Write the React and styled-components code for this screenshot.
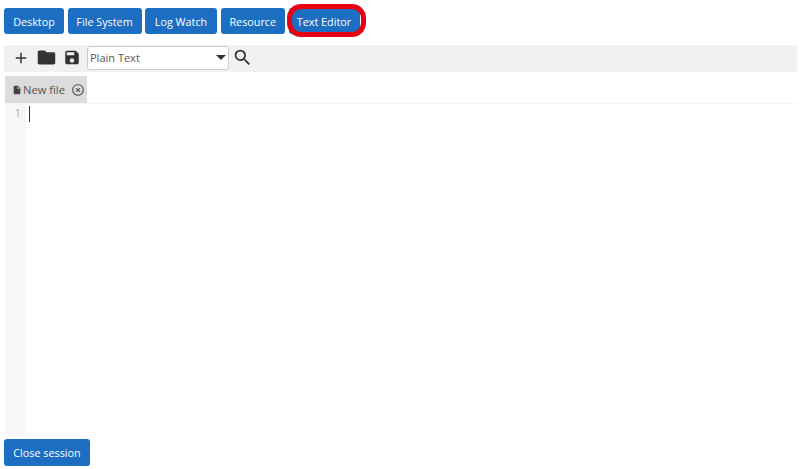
import styled, { createGlobalStyle } from 'styled-components';
import { MdAdd, MdFolder, MdSave, MdSearch, MdInsertDriveFile, MdHighlightOff } from 'react-icons/md';

const GlobalStyle = createGlobalStyle`
  html, body, #root {
    margin: 0;
    height: 100%;
  }

  body {
    background: #fff;
    font-family: "Open Sans", "Noto Sans", sans-serif;
    overflow: hidden;
  }
`;

const Page = styled.div`
  height: 469px;
  box-sizing: border-box;
  padding: 8px 3px 3px 4px;
  display: flex;
  flex-direction: column;
`;

const Tabs = styled.nav`
  display: flex;
  gap: 3.5px;
  height: 26px;
`;

const Button = styled.button`
  position: relative;
  border: 0;
  border-radius: 3px;
  background: #1b6ec2;
  color: #fff;
  font-family: inherit;
  font-size: 10.8px;
  padding: 0;
  height: ${({ $height }) => $height || 26}px;
  width: ${({ $width }) => $width}px;

  &.highlighted::after {
    content: '';
    position: absolute;
    left: -2px;
    right: -6px;
    top: -4px;
    bottom: -3px;
    border: 5px solid #e60012;
    border-radius: 14px;
  }
`;

const Toolbar = styled.div`
  display: flex;
  align-items: center;
  box-sizing: border-box;
  height: 27px;
  margin-top: 11px;
  padding: 0 0 2px 8px;
  background: #f1f1f1;
  color: #333;
`;

const IconButton = styled.span`
  display: flex;
  justify-content: center;
  align-items: center;
  width: ${({ $width }) => $width}px;
  font-size: ${({ $size }) => $size}px;
`;

const ModeSelect = styled.div`
  display: flex;
  align-items: center;
  justify-content: space-between;
  box-sizing: border-box;
  width: 142px;
  height: 24px;
  margin-left: 6px;
  padding: 0 2px;
  background: #fff;
  border: 1px solid #ccc;
  border-radius: 3px;
  color: #555;
  font-size: 11px;
`;

const Caret = styled.span`
  width: 0;
  height: 0;
  border-left: 5px solid transparent;
  border-right: 5px solid transparent;
  border-top: 5px solid #333;
`;

const FileTabs = styled.div`
  display: flex;
  height: 27px;
  margin: 4px 0 0 1px;
  border-bottom: 1px solid #f6f6f6;
`;

const FileTab = styled.div`
  display: flex;
  align-items: center;
  box-sizing: border-box;
  width: 82px;
  padding-left: 7px;
  background: #dcdcdc;
  color: #555;
  font-size: 11.2px;

  svg.file {
    font-size: 10px;
    margin-right: 1px;
    color: #444;
  }

  svg.close {
    font-size: 14px;
    margin-left: 6px;
    color: #555;
  }
`;

const Editor = styled.div`
  flex: 1;
  display: flex;
  margin-left: 1px;
`;

const Gutter = styled.div`
  box-sizing: border-box;
  width: 21px;
  padding: 1px 5px 0 0;
  background: #f7f7f7;
  color: #aaa;
  font-size: 11.5px;
  line-height: 16px;
  text-align: right;
`;

const Lines = styled.div`
  flex: 1;
  padding: 2px 0 0 3px;
`;

const Cursor = styled.div`
  width: 1px;
  height: 16px;
  background: #333;
`;

const Footer = styled.div`
  margin-top: 5px;
  flex: none;
`;

const tabs = [
  { label: 'Desktop', width: 60 },
  { label: 'File System', width: 74 },
  { label: 'Log Watch', width: 72 },
  { label: 'Resource', width: 64.5 },
];

export default function App() {
  return (
    <Page>
      <GlobalStyle />
      <Tabs>
        {tabs.map((t) => (
          <Button key={t.label} $width={t.width}>{t.label}</Button>
        ))}
        <Button className="highlighted" $width={71}>Text Editor</Button>
      </Tabs>
      <Toolbar>
        <IconButton $width={18} $size={22}><MdAdd /></IconButton>
        <IconButton $width={33} $size={21}><MdFolder /></IconButton>
        <IconButton $width={18} $size={19}><MdSave /></IconButton>
        <ModeSelect>
          Plain Text
          <Caret />
        </ModeSelect>
        <IconButton $width={26} $size={21}><MdSearch /></IconButton>
      </Toolbar>
      <FileTabs>
        <FileTab>
          <MdInsertDriveFile className="file" />
          New file
          <MdHighlightOff className="close" />
        </FileTab>
      </FileTabs>
      <Editor>
        <Gutter>1</Gutter>
        <Lines><Cursor /></Lines>
      </Editor>
      <Footer>
        <Button $width={86} $height={27}>Close session</Button>
      </Footer>
    </Page>
  );
}
